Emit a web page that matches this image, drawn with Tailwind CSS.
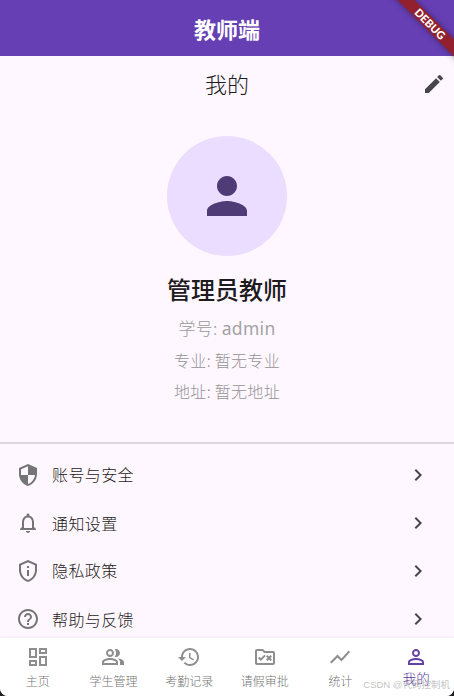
<!DOCTYPE html>
<html lang="zh-CN">
<head>
  <meta charset="UTF-8">
  <meta name="viewport" content="width=device-width, initial-scale=1.0">
  <title>教师端</title>
  <script src="https://cdn.jsdelivr.net/npm/@tailwindcss/browser@4"></script>
</head>
<body class="bg-[#202020] font-['Noto_Sans_CJK_SC',sans-serif]">
  <div class="relative w-[454px] h-[696px] flex flex-col overflow-hidden rounded-b-lg bg-[#fef7ff] text-[#1d1b20]">

    <!-- 顶栏 -->
    <header class="h-14 shrink-0 flex items-center justify-center bg-[#673fb4] text-white">
      <h1 class="text-[22px] leading-7 font-bold">教师端</h1>
    </header>
    <div class="absolute -top-[1px] right-[-36px] w-[120px] h-[50px] flex items-center justify-center rotate-45">
      <div class="w-full h-3 flex items-center justify-center bg-[#92202f] shadow-[0_0_6px_rgba(0,0,0,0.4)]">
        <span class="font-['Lato',sans-serif] text-[11px] leading-3 font-black text-white">DEBUG</span>
      </div>
    </div>

    <!-- 标题 -->
    <div class="h-14 shrink-0 grid grid-cols-[1fr_auto_1fr] items-center px-2">
      <span></span>
      <h2 class="text-[22px] leading-7 font-light pb-0.5">我的</h2>
      <svg class="size-6 fill-[#49454f] justify-self-end" viewBox="0 0 24 24"><path d="M3 17.25V21h3.75L17.81 9.94l-3.75-3.75L3 17.25zM20.71 7.04a1 1 0 0 0 0-1.41l-2.34-2.34a1 1 0 0 0-1.41 0l-1.83 1.83 3.75 3.75 1.83-1.83z"/></svg>
    </div>

    <!-- 个人信息 -->
    <section class="h-[330px] shrink-0 flex flex-col items-center pt-6 whitespace-nowrap">
      <div class="size-[120px] shrink-0 rounded-full bg-[#eaddff] flex items-center justify-center">
        <svg class="size-[60px] fill-[#4f3b75]" viewBox="0 0 24 24"><path d="M12 12c2.21 0 4-1.79 4-4s-1.79-4-4-4-4 1.79-4 4 1.79 4 4 4zm0 2c-2.67 0-8 1.34-8 4v2h16v-2c0-2.66-5.33-4-8-4z"/></svg>
      </div>
      <p class="mt-[15px] text-2xl leading-9 font-medium">管理员教师</p>
      <p class="mt-[5px] h-[33px] text-[17px] leading-8 font-light tracking-[0.3px] text-[#999]">学号: <span class="font-['Noto_Sans'] text-[17.5px] font-normal text-[#a3a3a3]">admin</span></p>
      <p class="text-base leading-[31px] font-light tracking-[0.3px] text-[#949494]">专业: 暂无专业</p>
      <p class="text-base leading-[31px] font-light tracking-[0.3px] text-[#949494]">地址: 暂无地址</p>
    </section>

    <!-- 菜单 -->
    <ul class="h-[196px] shrink-0 overflow-hidden border-t-2 border-[#ddd5e0] pt-[7px] text-base tracking-[0.4px] font-light">
      <li class="h-12 flex items-center pl-4 pr-6">
        <svg class="size-6 fill-[#757575]" viewBox="0 0 24 24"><path d="M12 1L3 5v6c0 5.55 3.84 10.74 9 12 5.16-1.26 9-6.45 9-12V5l-9-4zm0 10.99h7c-.53 4.12-3.28 7.79-7 8.94V12H5V6.3l7-3.11v8.8z"/></svg>
        <span class="ml-3 grow pb-0.5">账号与安全</span>
        <svg class="size-6 fill-[#49454f]" viewBox="0 0 24 24"><path d="M10 6L8.59 7.41 13.17 12l-4.58 4.59L10 18l6-6z"/></svg>
      </li>
      <li class="h-12 flex items-center pl-4 pr-6">
        <svg class="size-6 fill-[#757575]" viewBox="0 0 24 24"><path d="M12 22c1.1 0 2-.9 2-2h-4c0 1.1.9 2 2 2zm6-6v-5c0-3.07-1.63-5.64-4.5-6.32V4c0-.83-.67-1.5-1.5-1.5s-1.5.67-1.5 1.5v.68C7.64 5.36 6 7.92 6 11v5l-2 2v1h16v-1l-2-2zm-2 1H8v-6c0-2.48 1.51-4.5 4-4.5s4 2.02 4 4.5v6z"/></svg>
        <span class="ml-3 grow">通知设置</span>
        <svg class="size-6 fill-[#49454f]" viewBox="0 0 24 24"><path d="M10 6L8.59 7.41 13.17 12l-4.58 4.59L10 18l6-6z"/></svg>
      </li>
      <li class="h-12 flex items-center pl-4 pr-6">
        <svg class="size-6 fill-[#757575]" viewBox="0 0 24 24"><path d="M12 3.19l7 3.11V11c0 4.52-2.98 8.69-7 9.93-4.02-1.24-7-5.41-7-9.93V6.3l7-3.11M12 1L3 5v6c0 5.55 3.84 10.74 9 12 5.16-1.26 9-6.45 9-12V5l-9-4zM11 7h2v2h-2V7zm0 4h2v6h-2v-6z"/></svg>
        <span class="ml-3 grow pb-0.5">隐私政策</span>
        <svg class="size-6 fill-[#49454f]" viewBox="0 0 24 24"><path d="M10 6L8.59 7.41 13.17 12l-4.58 4.59L10 18l6-6z"/></svg>
      </li>
      <li class="h-12 flex items-center pl-4 pr-6">
        <svg class="size-6 fill-[#757575]" viewBox="0 0 24 24"><path d="M11 18h2v-2h-2v2zm1-16C6.48 2 2 6.48 2 12s4.48 10 10 10 10-4.48 10-10S17.52 2 12 2zm0 18c-4.41 0-8-3.59-8-8s3.59-8 8-8 8 3.59 8 8-3.59 8-8 8zm0-14c-2.21 0-4 1.79-4 4h2c0-1.1.9-2 2-2s2 .9 2 2c0 2-3 1.75-3 5h2c0-2.25 3-2.5 3-5 0-2.21-1.79-4-4-4z"/></svg>
        <span class="ml-3 grow">帮助与反馈</span>
        <svg class="size-6 fill-[#49454f]" viewBox="0 0 24 24"><path d="M10 6L8.59 7.41 13.17 12l-4.58 4.59L10 18l6-6z"/></svg>
      </li>
    </ul>

    <!-- 底部导航 -->
    <nav class="grow grid grid-cols-6 bg-white shadow-[0_-1px_3px_rgba(0,0,0,0.05)] pt-[7px] text-xs leading-6 font-light text-[#757575] fill-[#8e8e8e]">
      <div class="flex flex-col items-center">
        <svg class="size-6" viewBox="0 0 24 24"><path d="M19 5v2h-4V5h4M9 5v6H5V5h4m10 8v6h-4v-6h4M9 17v2H5v-2h4M21 3h-8v6h8V3zM11 3H3v10h8V3zm10 8h-8v10h8V11zm-10 4H3v6h8v-6z"/></svg>
        <span>主页</span>
      </div>
      <div class="flex flex-col items-center">
        <svg class="size-6" viewBox="0 0 24 24"><path d="M16.67 13.13C18.04 14.06 19 15.32 19 17v3h4v-3c0-2.18-3.57-3.47-6.33-3.87zM15 12c2.21 0 4-1.79 4-4s-1.79-4-4-4c-.47 0-.91.1-1.33.24C14.5 5.27 15 6.58 15 8s-.5 2.73-1.33 3.76c.42.14.86.24 1.33.24zM9 12c2.21 0 4-1.79 4-4s-1.79-4-4-4-4 1.79-4 4 1.79 4 4 4zm0-6c1.1 0 2 .9 2 2s-.9 2-2 2-2-.9-2-2 .9-2 2-2zM9 13c-2.67 0-8 1.34-8 4v3h16v-3c0-2.66-5.33-4-8-4zm6 5H3v-.99C3.2 16.29 6.3 15 9 15s5.8 1.29 6 2v1z"/></svg>
        <span>学生管理</span>
      </div>
      <div class="flex flex-col items-center">
        <svg class="size-6" viewBox="0 0 24 24"><path d="M13 3c-4.97 0-9 4.03-9 9H1l3.89 3.89.07.14L9 12H6c0-3.87 3.13-7 7-7s7 3.13 7 7-3.13 7-7 7c-1.93 0-3.68-.79-4.94-2.06l-1.42 1.42C8.27 19.99 10.51 21 13 21c4.97 0 9-4.03 9-9s-4.03-9-9-9zm-1 5v5l4.28 2.54.72-1.21-3.5-2.08V8H12z"/></svg>
        <span>考勤记录</span>
      </div>
      <div class="flex flex-col items-center">
        <svg class="size-6" viewBox="0 0 24 24"><path d="M20 6h-8l-2-2H4c-1.1 0-2 .9-2 2v12c0 1.1.9 2 2 2h16c1.1 0 2-.9 2-2V8c0-1.1-.9-2-2-2zm0 12H4V6h5.17l2 2H20v10z"/><path d="M7.83 16L5 13.17l1.41-1.41 1.41 1.41 3.54-3.54 1.41 1.41L7.83 16zM17.41 13L19 14.59 17.59 16 16 14.41 14.41 16 13 14.59 14.59 13 13 11.41 14.41 10 16 11.59 17.59 10 19 11.41 17.41 13z"/></svg>
        <span>请假审批</span>
      </div>
      <div class="flex flex-col items-center">
        <svg class="size-6" viewBox="0 0 24 24"><path d="M3.5 18.49l6-6.01 4 4L22 6.92l-1.41-1.41-7.09 7.97-4-4L2 16.99z"/></svg>
        <span>统计</span>
      </div>
      <div class="flex flex-col items-center text-[#5a3a9c] fill-[#6340a8]">
        <svg class="size-6" viewBox="0 0 24 24"><path d="M12 5.9a2.1 2.1 0 1 1 0 4.2 2.1 2.1 0 0 1 0-4.2m0 9c2.97 0 6.1 1.46 6.1 2.1v1.1H5.9V17c0-.64 3.13-2.1 6.1-2.1M12 4C9.79 4 8 5.79 8 8s1.79 4 4 4 4-1.79 4-4-1.79-4-4-4zm0 9c-2.67 0-8 1.34-8 4v3h16v-3c0-2.66-5.33-4-8-4z"/></svg>
        <span class="text-[13.5px] leading-[18px]">我的</span>
      </div>
    </nav>

    <!-- 水印 -->
    <span class="absolute right-1 bottom-[5px] text-[9.5px] leading-3 whitespace-nowrap text-[#a8a8a8]/70 font-['Liberation_Sans','Noto_Sans_CJK_SC',sans-serif]">CSDN @代码控制机</span>
  </div>
</body>
</html>
